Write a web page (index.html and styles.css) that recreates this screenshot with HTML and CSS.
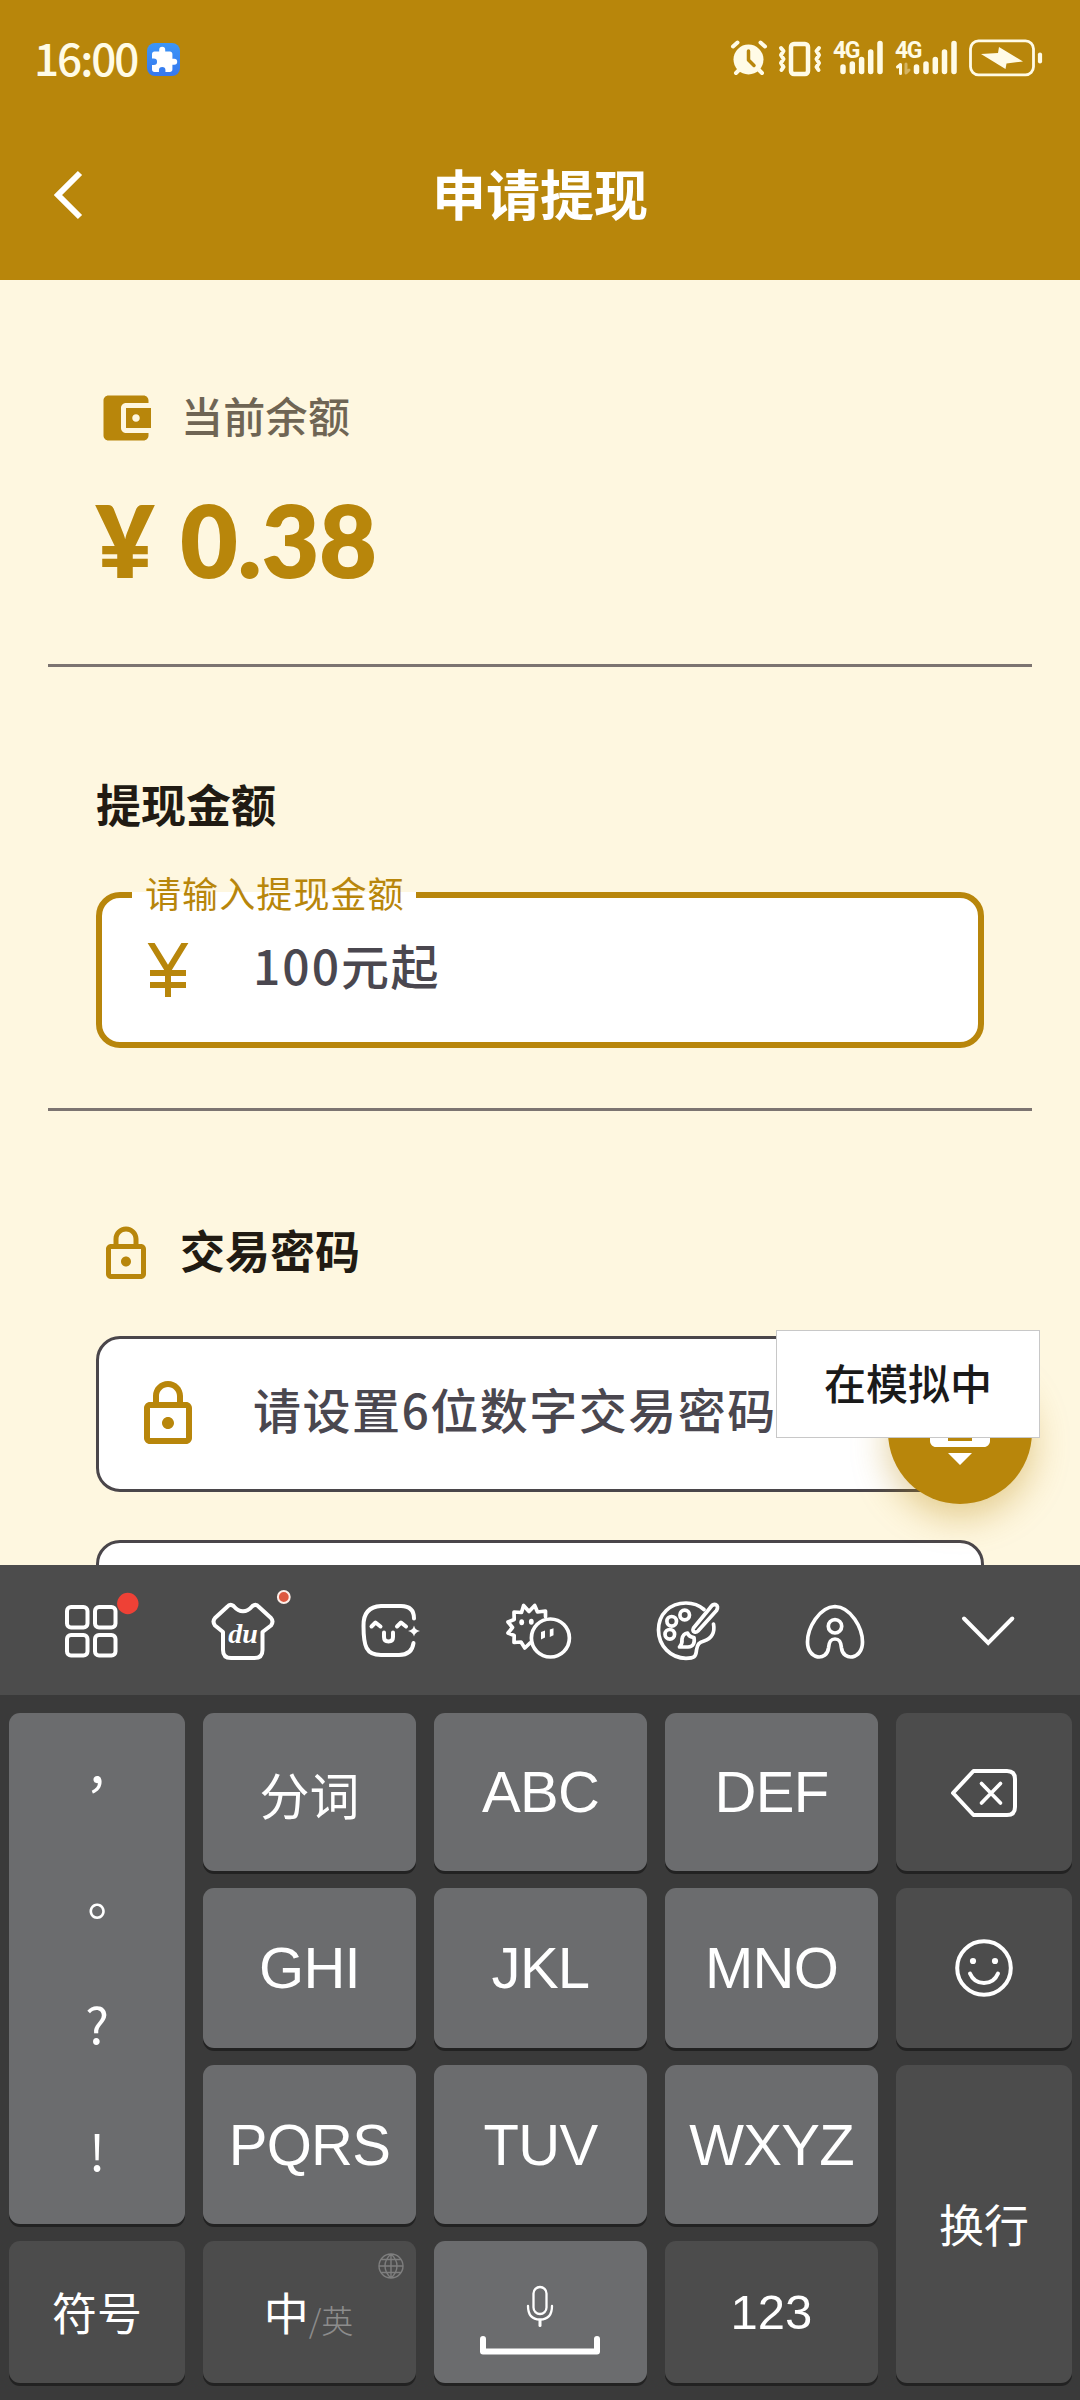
FILE: index.html
```html
<!DOCTYPE html>
<html lang="zh-CN">
<head>
<meta charset="utf-8">
<title>申请提现</title>
<link rel="stylesheet" href="styles.css">
</head>
<body>
<div class="screen">
  <header class="header">
    <div class="status">
      <span class="clock">16:00</span>
      <svg class="puzzle" viewBox="0 0 33 33"><defs><linearGradient id="pg" x1="0" y1="0" x2="0" y2="1"><stop offset="0" stop-color="#3c96f8"/><stop offset="1" stop-color="#3678ee"/></linearGradient></defs><rect width="33" height="33" rx="8" fill="url(#pg)"/><path transform="translate(2.6 2.6) scale(1.2)" fill="#fff" d="M20.5 11H19V7c0-1.100-.9-2-2-2h-4V3.500a2.500 2.500 0 0 0-5 0V5H4c-1.100 0-2 .9-2 2v3.800h1.500a2.700 2.700 0 0 1 0 5.400H2V20c0 1.100.9 2 2 2h3.800v-1.500a2.700 2.700 0 0 1 5.400 0V22H17c1.100 0 2-.9 2-2v-4h1.500a2.500 2.500 0 0 0 0-5z"/></svg>
      <svg class="indicators" viewBox="0 0 320 40" fill="none" stroke="#fffbe6" stroke-linecap="round" stroke-linejoin="round">
        <g>
          <circle cx="18.500" cy="20.500" r="15" fill="#fffbe6" stroke="none"/>
          <path stroke-width="4" d="M3 7.500l4.500-4M35 7.500l-4.500-4M6 34l5-5M32 34l-5-5"/>
          <path stroke="#b8860b" stroke-width="3.500" d="M18.500 12v9l5.500 5.500"/>
          <rect x="61" y="5" width="17" height="30" rx="3" stroke-width="4.500"/>
          <path stroke-width="4" d="M51 9l2.500 3-2.500 4 2.500 4-2.500 4 2.500 4-2 3M89 9l-2.500 3 2.500 4-2.500 4 2.500 4-2.500 4 2 3"/>
          <path stroke-width="5.500" d="M113 28v4.500M122.300 25v7.500M131.600 20.500v12M140.700 13v19.500M150 4.500v28M186.500 28v4.500M196 25v7.500M205.300 20.500v12M214.500 13v19.500M224 4.500v28"/>
          <path stroke-width="3" d="M167.500 28l3-2.500v9"/>
          <path stroke-width="3" opacity=".4" d="M176 25v9l3-3"/>
          <rect x="240.500" y="1.800" width="63" height="34" rx="8" stroke-width="2.800"/>
          <path stroke-width="4.200" d="M310 15.500v7"/>
        </g>
        <path fill="#fffbe6" stroke="none" d="M251 15l17-1 1-6 24 14.500-16.500 2-1 5.500z"/>
        <text class="net" x="103" y="19">4G</text>
        <text class="net" x="165" y="19">4G</text>
      </svg>
    </div>
    <div class="appbar">
      <svg class="back" viewBox="0 0 30 50"><path d="M26 3L4 25l22 22" fill="none" stroke="#fff" stroke-width="6"/></svg>
      <h1 class="title">申请提现</h1>
    </div>
  </header>

  <main class="page">
    <section class="balance">
      <div class="row">
        <svg class="icon60" viewBox="0 0 24 24"><path d="M21 18v1c0 1.100-.9 2-2 2H5c-1.110 0-2-.9-2-2V5c0-1.100.89-2 2-2h14c1.100 0 2 .9 2 2v1h-9c-1.110 0-2 .9-2 2v8c0 1.100.89 2 2 2h9zm-9-2h10V8H12v8zm4-2.500c-.83 0-1.500-.67-1.500-1.500s.67-1.500 1.500-1.500 1.500.67 1.500 1.500-.67 1.500-1.500 1.500z"/></svg>
        <span class="balance-label">当前余额</span>
      </div>
      <div class="amount">¥ <span>0.38</span></div>
    </section>
    <hr class="rule">
    <section class="withdraw">
      <h2 class="heading">提现金额</h2>
      <div class="field focused">
        <span class="float-label">请输入提现金额</span>
        <svg class="icon72" viewBox="0 0 24 24"><path d="M13.280 12H18v2h-5v2h5v2h-5v3h-2v-3H6v-2h5v-2H6v-2h4.720L5.200 3h2.340L12 10.290 16.460 3h2.340z"/></svg>
        <span class="hint"><span class="num">100</span>元起</span>
      </div>
    </section>
    <hr class="rule">
    <section class="password">
      <div class="row">
        <svg class="icon60" viewBox="0 0 24 24"><path d="M18 8h-1V6c0-2.760-2.240-5-5-5S7 3.240 7 6v2H6c-1.100 0-2 .9-2 2v10c0 1.100.9 2 2 2h12c1.100 0 2-.9 2-2V10c0-1.100-.9-2-2-2zM9 6c0-1.660 1.340-3 3-3s3 1.340 3 3v2H9V6zm9 14H6V10h12v10zm-6-3c1.100 0 2-.9 2-2s-.9-2-2-2-2 .9-2 2 .9 2 2 2z"/></svg>
        <h2 class="heading">交易密码</h2>
      </div>
      <div class="field">
        <svg class="icon72" viewBox="0 0 24 24"><path d="M18 8h-1V6c0-2.760-2.240-5-5-5S7 3.240 7 6v2H6c-1.100 0-2 .9-2 2v10c0 1.100.9 2 2 2h12c1.100 0 2-.9 2-2V10c0-1.100-.9-2-2-2zM9 6c0-1.660 1.340-3 3-3s3 1.340 3 3v2H9V6zm9 14H6V10h12v10zm-6-3c1.100 0 2-.9 2-2s-.9-2-2-2-2 .9-2 2 .9 2 2 2z"/></svg>
        <span class="hint">请设置6位数字交易密码</span>
      </div>
      <div class="field"></div>
    </section>
    <div class="fab"><svg class="fab-icon" viewBox="0 0 24 24"><path d="M20 3H4c-1.100 0-1.990.9-1.990 2L2 15c0 1.100.9 2 2 2h16c1.100 0 2-.9 2-2V5c0-1.100-.9-2-2-2zm-9 3h2v2h-2V6zm0 3h2v2h-2V9zM8 6h2v2H8V6zm0 3h2v2H8V9zm-1 2H5V9h2v2zm0-3H5V6h2v2zm9 7H8v-2h8v2zm0-4h-2V9h2v2zm0-3h-2V6h2v2zm3 3h-2V9h2v2zm0-3h-2V6h2v2zm-7 15l4-4H8l4 4z"/></svg></div>
    <div class="toast">在模拟中</div>
  </main>

  <div class="keyboard">
    <div class="toolbar">
      <svg class="tool" viewBox="0 0 148 80"><g class="ln"><rect x="50" y="17" width="20.500" height="20.500" rx="4"/><rect x="78" y="17" width="20.500" height="20.500" rx="4"/><rect x="50" y="45" width="20.500" height="20.500" rx="4"/><rect x="78" y="45" width="20.500" height="20.500" rx="4"/></g><circle cx="110.800" cy="13.500" r="10.700" fill="#ee4136"/></svg>
      <svg class="tool" viewBox="0 0 148 80"><path class="ln" d="M62 17Q65 13.500 68.500 16 73 21.300 78 21.300 83 21.300 87.500 16 91 13.500 94 17L106 28Q109 31.500 106 35.500L97.500 42V60Q97.500 68 89.500 68H66Q58 68 58 60V42L50 35.500Q47 31.500 50 28Z"/><text class="du" x="78" y="53">du</text><circle cx="118.800" cy="7" r="5.900" fill="#dd5840" stroke="#fdeee8" stroke-width="2"/></svg>
      <svg class="tool" viewBox="0 0 148 80"><path class="ln" d="M101 28.500Q101 16 88 16H68Q50 17 50.500 36C50.500 56 53 65 68 65H86Q99 65 100.500 53M58.500 36.500l4-4 5 4M84 36.500l4-4 5 4M71 42.500v4.500q0 4.500 4.500 4.500t4.500-4.500v-4.500"/><path fill="#fff" d="M101 35.500q1 4.500 6 5.500-5 1-6 5.500-1-4.500-6-5.500 5-1 6-5.500z"/></svg>
      <svg class="tool" viewBox="0 0 148 80"><path class="ln thin" d="M84.500 26.500V21L76.500 22 73.700 15.500 68 21.500 62.600 15.500 60.500 22.500 53 22 53.200 29.500 47 32 51.500 37.500 47 43 53.200 45.500 53 52.500 60 52 63.800 58 69 53"/><circle class="ln thin" cx="89.400" cy="48" r="19"/><g fill="#fff"><ellipse cx="60.700" cy="32.300" rx="2.400" ry="3"/><ellipse cx="70.300" cy="31.700" rx="2.400" ry="3"/><path d="M80 42l4-1.500v7l-4 2zM88.800 39.500l3.700-1.200v7l-3.700 1.700z"/></g></svg>
      <svg class="tool" viewBox="0 0 148 80"><g class="ln thin"><path d="M95 19.500C90 15 84 13 77 13 61 13 49.500 24 49.500 40S62 68.300 77 68.300C85 68.300 87 67 87.500 60 88.500 54 90 52.500 95 51 103 48.500 106 42 104.500 34"/><circle cx="62.700" cy="31.300" r="4.800"/><circle cx="75.700" cy="25" r="4.800"/><circle cx="60.800" cy="44.300" r="4.800"/><path d="M101 18L84.500 38Q83 41 85.500 42 87.500 42.500 89 41L107.500 20.500Q110 16 106.500 14.500 103.500 14 101 18zM78.500 43q1.500 4 6.500 4.500 1.500 9-6 9.500h-8.500q3-3 2.500-8 1-5.500 5.500-6z"/></g></svg>
      <svg class="tool" viewBox="0 0 148 80"><g class="ln thin"><path d="M78 16.500C62 17 50.500 38 50.500 52 50.500 70 70 71.500 71.500 58 72 51 74 49 78 49S84 51 84.500 58C86 71.500 105.500 70 105.500 52 105.500 38 94 17 78 16.500Z"/><circle cx="78" cy="36.300" r="6.700"/></g></svg>
      <svg class="tool" viewBox="0 0 148 80"><path class="ln miter" d="M59 28.500L83.200 53 107.300 28.500"/></svg>
    </div>
    <div class="keys">
      <div class="key punct"><span class="full">，</span><span class="full">。</span><span class="half">?</span><span class="half">!</span></div>
      <div class="key sep">分词</div>
      <div class="key latin">ABC</div>
      <div class="key latin">DEF</div>
      <div class="key dark"><svg class="bksp" viewBox="0 0 66 48"><path class="ln" d="M22.500 2H56q8 0 8 8v28q0 8-8 8H22.500L2 24z"/><path class="ln thin" d="M30.500 14.500l19 19.500M49.500 14.500L30.500 34"/></svg></div>
      <div class="key latin">GHI</div>
      <div class="key latin">JKL</div>
      <div class="key latin">MNO</div>
      <div class="key dark"><svg class="smile" viewBox="0 0 58 58"><circle class="ln" cx="29" cy="29" r="26.800"/><path class="ln" d="M15 34.500q4 9.500 14 9.500t14-9.500"/><circle cx="18" cy="22" r="3.100" fill="#fff"/><circle cx="40" cy="22" r="3.100" fill="#fff"/></svg></div>
      <div class="key latin">PQRS</div>
      <div class="key latin">TUV</div>
      <div class="key latin">WXYZ</div>
      <div class="key dark enter">换行</div>
      <div class="key dark">符号</div>
      <div class="key dark lang"><span>中</span><small>/英</small>
        <svg class="globe" viewBox="0 0 26 26"><path d="M13 1a12 12 0 1 0 0 24 12 12 0 0 0 0-24zM13 1v24M1 13h24M3.500 6.500h19M3.500 19.500h19M13 1C5 8 5 18 13 25M13 1c8 7 8 17 0 24"/></svg></div>
      <div class="key space"><svg class="mic" viewBox="0 0 120 70"><g fill="none" stroke="#fff" stroke-linecap="round"><rect x="53.500" y="2" width="13" height="27" rx="6.500" stroke-width="2.300"/><path stroke-width="2.300" d="M48 21q0 13.500 12 13.500T72 21"/><path stroke-width="3" d="M60 35.500v5"/><path stroke-width="6" stroke-linejoin="round" d="M3 54v12.500h114V54"/></g></svg></div>
      <div class="key dark digits">123</div>
    </div>
  </div>
</div>
</body>
</html>
```
FILE: styles.css
```css
* { box-sizing: border-box; }
body { margin: 0; font-family: "Noto Sans CJK SC", sans-serif; }
.screen { width: 1080px; height: 2400px; overflow: hidden; display: flex; flex-direction: column; background: #fef7e0; }

.header { height: 280px; background: #b8860b; color: #fff; }
.status { height: 110px; padding: 8px 34px 0 34px; display: flex; align-items: center; }
.clock { width: 113px; padding-bottom: 4px; font: 500 44px/1 "Noto Sans CJK SC", sans-serif; letter-spacing: -2px; color: #fffbe6; }
.puzzle { width: 33px; height: 33px; }
.indicators { width: 320px; height: 40px; margin-left: auto; margin-right: -4px; overflow: visible; }
.net { font: 700 23px "Roboto", sans-serif; fill: #fffbe6; stroke: none; letter-spacing: -1.5px; }
.appbar { height: 170px; display: grid; grid-template-columns: 1fr auto 1fr; align-items: center; padding: 0 54px; }
.back { width: 30px; height: 50px; }
.title { margin: 0; padding-bottom: 5px; font-size: 54px; line-height: 60px; font-weight: 700; }

.page { position: relative; height: 1285px; overflow: hidden; padding: 0 48px; }
.row { display: flex; align-items: center; gap: 24px; height: 60px; }
.icon60, .icon72 { flex: none; fill: #b8860b; }
.icon60 { width: 60px; height: 60px; }
.icon72 { width: 72px; height: 72px; }
.balance { height: 384px; padding: 108px 48px 0; }
.balance-label { padding: 0 0 6px 1px; font-size: 42px; letter-spacing: .3px; line-height: 60px; font-weight: 500; color: #6f6554; }
.amount { margin-top: 31px; font: 800 100px/120px "Lato", sans-serif; color: #b8860b; white-space: pre; }
.amount span { margin-left: 3px; letter-spacing: -.3px; }
.rule { height: 3px; margin: 0; border: 0; background: #7c7471; }
.withdraw { height: 441px; padding: 107px 48px 0; }
.heading { margin: 0; font-size: 45px; line-height: 60px; font-weight: 700; color: #211b13; }
.withdraw .heading { margin-bottom: 58px; }
.field { position: relative; height: 156px; display: flex; align-items: center; gap: 49px; padding: 0 33px; border: 3px solid #4a464a; border-radius: 24px; background: #fff; }
.focused { border: 6px solid #b8860b; padding: 0 30px; }
.float-label { position: absolute; left: 30px; top: -6px; width: 284px; height: 6px; padding-left: 13px; background: #fff; font-size: 36px; line-height: 0; letter-spacing: 1.1px; white-space: nowrap; color: #b8860b; }
.hint { padding-bottom: 12px; font-size: 48px; line-height: 72px; letter-spacing: 1.5px; font-weight: 500; color: #4a474f; white-space: nowrap; }
.num { letter-spacing: 2px; }
.password { padding: 113px 48px 0; }
.password .heading { padding-bottom: 9px; }
.password .row { margin-bottom: 52px; }
.password .field + .field { margin-top: 48px; }
.fab { position: absolute; left: 888px; top: 1080px; width: 144px; height: 144px; display: grid; place-items: center; border-radius: 50%; background: #b8860b; box-shadow: 0 12px 36px rgba(184, 134, 11, .4); }
.fab-icon { width: 72px; height: 72px; fill: #fff; }
.toast { position: absolute; left: 776px; top: 1050px; width: 264px; height: 108px; border: 1px solid #c8c8c8; background: #fff; color: #1a1a1a; font-size: 42px; font-weight: 500; line-height: 102px; text-align: center; }

.keyboard { flex: 1; background: #3a3a3a; color: #fff; }
.toolbar { height: 130px; padding: 25px 17px 0; display: flex; background: #4c4c4c; }
.tool { width: 148px; height: 80px; }
.ln { fill: none; stroke: #fff; stroke-width: 4; stroke-linecap: round; stroke-linejoin: round; }
.thin { stroke-width: 3.7; }
.miter { stroke-linejoin: miter; }
.du { font: italic 700 28px "Liberation Serif", serif; fill: #fff; text-anchor: middle; }
.keys { display: grid; grid-template-columns: 176px 213px 213px 213px 176px; grid-template-rows: 158px 160px 159px 142px; gap: 17px 18px; padding: 18px 8px 0 9px; }
.key { position: relative; display: flex; align-items: center; justify-content: center; border-radius: 11px; background: #6b6c6e; box-shadow: 0 3px 0 #222; font-size: 45px; font-weight: 400; line-height: 60px; }
.dark { background: #4c4c4c; }
.latin { font: 400 58px/60px "Liberation Sans", sans-serif; letter-spacing: -.7px; }
.sep { font-size: 50px; padding-top: 2px; }
.punct { grid-row: span 3; flex-direction: column; }
.punct span { height: 127.5px; line-height: 127.5px; }
.full { font-family: "Noto Sans CJK TC", sans-serif; font-size: 50px; padding-top: 4px; }
.half { font-size: 50px; margin-top: -10px; margin-bottom: 10px; }
.enter { grid-row: span 2; }
.bksp { width: 66px; height: 48px; margin-top: 2px; }
.smile { width: 58px; height: 58px; }
.lang small { margin-top: 14px; font-size: 32px; font-weight: 300; color: #8c8c8c; }
.lang { padding-right: 2px; }
.globe { position: absolute; right: 12px; top: 12px; width: 26px; height: 26px; fill: none; stroke: #7e7e7e; stroke-width: 1.4; }
.mic { width: 120px; height: 70px; margin: 15px 2px 0 0; }
.digits { font: 400 49px/60px "Liberation Sans", sans-serif; }
```
